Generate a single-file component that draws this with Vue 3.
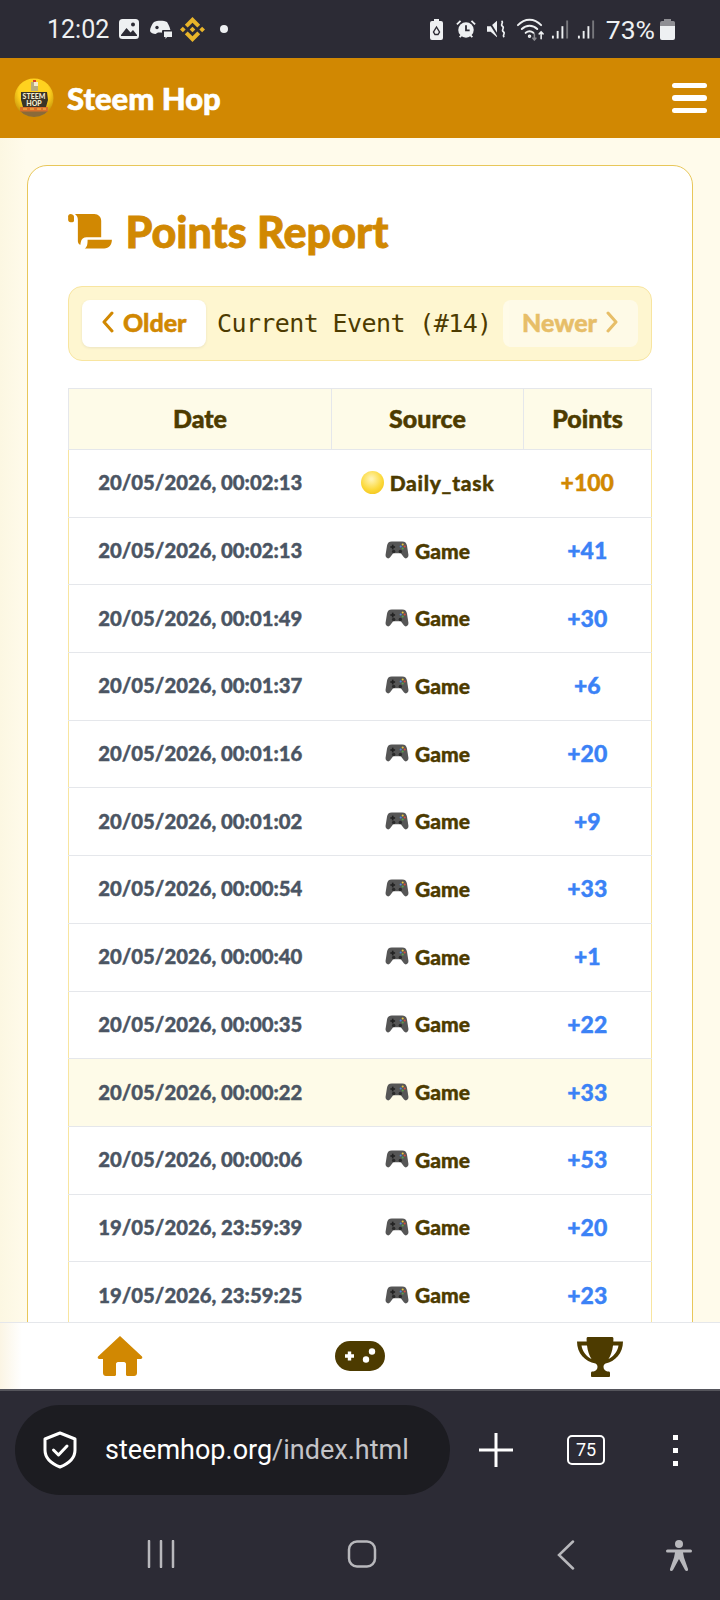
<template>
  <div class="phone">
    <div class="status-bar">
      <div class="status-left">
        <span class="clock">12:02</span>
        <svg width="22" height="22" viewBox="0 0 22 22">
          <rect x="1" y="1" width="20" height="20" rx="3.5" fill="#eef0f2" />
          <circle cx="15" cy="6.5" r="2" fill="#2c2b35" />
          <path d="M3 17l5.5-7 4 4.5 2.500-2.500 4 5v1H3z" fill="#2c2b35" />
        </svg>
        <svg width="24" height="22" viewBox="0 0 24 22">
          <path d="M5 4c3-1.600 10-1.600 13 0 2 3 3.500 7 3.500 9h-5l-2 3-2-1.500H9L6.500 16c-2 0-5-1-5.500-3C1 10 3 6 5 4z" fill="#eef0f2" />
          <circle cx="8" cy="9.500" r="1.700" fill="#2c2b35" />
          <rect x="13" y="12" width="11" height="8" rx="1" fill="#2c2b35" />
          <path d="M15 13.500h8v5.500h-5l-1.500 2v-2H15z" fill="#eef0f2" />
        </svg>
        <svg class="binance" width="25" height="25" viewBox="0 0 24 24" fill="#e9b52a">
          <path d="M16.624 13.920l2.718 2.716-7.353 7.353-7.353-7.352 2.718-2.717 4.635 4.660 4.636-4.660zm4.637-4.637L24 12l-2.715 2.716L18.568 12l2.693-2.716zm-9.272.001l2.716 2.692-2.716 2.717L9.272 12l2.717-2.715zm-9.272-.001L5.409 12l-2.692 2.692L0 12l2.717-2.717zM11.989.012l7.353 7.329-2.718 2.715-4.635-4.636-4.636 4.660-2.717-2.715 7.353-7.353z" />
        </svg>
        <span class="dot"></span>
      </div>
      <div class="status-right">
        <svg width="15" height="21" viewBox="0 0 15 21">
          <path d="M5 0h5v2h2a2 2 0 0 1 2 2v15a2 2 0 0 1-2 2H3a2 2 0 0 1-2-2V4a2 2 0 0 1 2-2h2z" fill="#eef0f2" />
          <path d="M7.500 8l-3 5 1.500 2.500h3L10.500 13z" fill="none" stroke="#2c2b35" stroke-width="1.400" />
        </svg>
        <svg class="gap-12" width="20" height="20" viewBox="0 0 22 22">
          <circle cx="11" cy="12" r="8.500" fill="#eef0f2" />
          <path d="M11 7v5.500h4" fill="none" stroke="#2c2b35" stroke-width="2" />
          <path d="M1 6l4-4M21 6l-4-4M4 20l2-2M18 20l-2-2" stroke="#eef0f2" stroke-width="2" />
        </svg>
        <svg class="gap-11" width="20" height="20" viewBox="0 0 22 22">
          <path d="M0 8h4l7-6v18l-7-6H0z" fill="#eef0f2" />
          <path d="M1 1l12 19" stroke="#2c2b35" stroke-width="2" />
          <path d="M16 2c3 2-2 4 1 6s-2 4 1 6-2 4 1 6" fill="none" stroke="#eef0f2" stroke-width="1.800" />
        </svg>
        <svg class="gap-9" width="29" height="24" viewBox="0 0 30 24" fill="none" stroke="#eef0f2" stroke-width="2" stroke-linecap="round">
          <path d="M2 8c7-7.500 17-7.500 24 0" />
          <path d="M6 12c4.500-4.500 11.500-4.500 16 0" />
          <path d="M10 16c2.500-2 5.500-2 8 0" />
          <circle cx="14" cy="19.500" r="0.800" />
          <path d="M26 22v-7M24 17l2-2 2 2" stroke-width="1.600" />
          <path d="M19 17v6M17.500 21.500l1.500 1.800 1.500-1.800" stroke="#8a8a90" stroke-width="1.600" />
        </svg>
        <svg class="gap-7" width="19" height="21" viewBox="0 0 20 21">
          <rect x="1" y="17" width="2" height="3" fill="#eef0f2" />
          <rect x="6" y="12" width="2" height="8" fill="#eef0f2" />
          <rect x="11" y="7" width="2" height="13" fill="#eef0f2" />
          <rect x="16" y="1" width="2" height="19" fill="#77777c" />
        </svg>
        <svg class="gap-8" width="19" height="21" viewBox="0 0 20 21">
          <rect x="1" y="17" width="2" height="3" fill="#eef0f2" />
          <rect x="6" y="12" width="2" height="8" fill="#eef0f2" />
          <rect x="11" y="7" width="2" height="13" fill="#eef0f2" />
          <rect x="16" y="1" width="2" height="19" fill="#77777c" />
        </svg>
        <span class="battery-pct">73%</span>
        <svg class="gap-5" width="15" height="21" viewBox="0 0 15 21">
          <path d="M4 0h7v2h1.500A2 2 0 0 1 15 4v5H0V4a2 2 0 0 1 2-2h2z" fill="#8f8f94" />
          <path d="M0 7h15v12a2 2 0 0 1-2 2H2a2 2 0 0 1-2-2z" fill="#eef0f2" />
        </svg>
      </div>
    </div>

    <header class="app-header">
      <div class="brand">
        <svg class="logo" width="40" height="40" viewBox="0 0 40 40">
          <defs>
            <radialGradient id="logoFill" cx="50%" cy="35%" r="65%">
              <stop offset="60%" stop-color="#ffd21f" />
              <stop offset="100%" stop-color="#c08c08" />
            </radialGradient>
          </defs>
          <circle cx="20" cy="20" r="19.500" fill="url(#logoFill)" />
          <path d="M3 29a19.500 19.500 0 0 0 34 0l-3 4H6z" fill="#8a6a3a" />
          <rect x="17" y="4" width="7" height="9" fill="#b9ad7c" />
          <rect x="20" y="4" width="4" height="4" fill="#f4ecd0" />
          <rect x="19" y="2" width="3" height="2" fill="#d8402a" />
          <path d="M7 14h26l1 8-2 7H9l-2-7z" fill="#3b3427" />
          <text x="20" y="20.500" text-anchor="middle" class="logo-text">STEEM</text>
          <text x="20" y="27.500" text-anchor="middle" class="logo-text">HOP</text>
          <rect x="6" y="29" width="28" height="4.500" fill="#d9702a" />
          <path d="M9 31h4M16 31h4M23 31h4M29 31h3" stroke="#ffc24a" stroke-width="1" />
        </svg>
        <span class="brand-name">Steem Hop</span>
      </div>
      <div class="burger"><span></span><span></span><span></span></div>
    </header>

    <main class="content">
      <section class="card">
        <h1 class="title">
          <svg width="45" height="35" viewBox="0 0 46 36" fill="#d18802">
            <path d="M0 2.500C0 1 1 0 2.500 0S6 1 6 2.500V7c0 .8-.7 1.500-1.500 1.500h-2C1 8.500 0 7.500 0 6z" />
            <path d="M7 0h20c4 0 7 3 7 7v17H19c-3 0-5.500 2-6 5l-.5 3C11 31 10 29.500 10 28V6c0-2.500-1-4.500-3-6z" />
            <path d="M20 26.500h25c0 5-3 9-8 9H17c2.500-1.500 3-4 3-9z" />
          </svg>
          <span>Points Report</span>
        </h1>

        <div class="pager">
          <button class="pager-btn">
            <svg width="13" height="22" viewBox="0 0 13 22"><path d="M11 2L3 11l8 9" fill="none" stroke="currentColor" stroke-width="3" stroke-linecap="round" stroke-linejoin="round" /></svg>
            Older
          </button>
          <span class="pager-label">Current Event (#14)</span>
          <button class="pager-btn disabled">
            Newer
            <svg width="13" height="22" viewBox="0 0 13 22"><path d="M2 2l8 9-8 9" fill="none" stroke="currentColor" stroke-width="3" stroke-linecap="round" stroke-linejoin="round" /></svg>
          </button>
        </div>

        <table class="report">
          <thead>
            <tr>
              <th class="col-date">Date</th>
              <th class="col-source">Source</th>
              <th class="col-points">Points</th>
            </tr>
          </thead>
          <tbody>
            <tr v-for="row in rows" :key="row.date + row.points" :class="{ hover: row.hover }">
              <td class="date">{{ row.date }}</td>
              <td class="source">
                <span class="source-inner" :class="{ daily: row.daily }">
                  <span v-if="row.daily" class="coin"></span>
                  <svg v-else width="24" height="20" viewBox="0 0 25 21">
                    <path d="M7 1.500h11c3 0 4.500 1.500 5 4.500l1.500 9.500c.4 3-2.600 5-4.600 3L16.500 14h-8l-3.400 4.500c-2 2-5 0-4.600-3L2 6c.5-3 2-4.500 5-4.500z" fill="#565656" />
                    <rect x="5.500" y="6.500" width="5" height="1.700" fill="#222" />
                    <rect x="7.150" y="4.900" width="1.700" height="5" fill="#222" />
                    <circle cx="18.500" cy="4.800" r="1.100" fill="#e8c43a" />
                    <circle cx="18.500" cy="9" r="1.100" fill="#5aa04a" />
                    <circle cx="16.400" cy="6.900" r="1.100" fill="#4a86d8" />
                    <circle cx="20.600" cy="6.900" r="1.100" fill="#d8503a" />
                    <circle cx="9" cy="12" r="1.800" fill="#2a2a2a" />
                    <circle cx="16" cy="12" r="1.800" fill="#2a2a2a" />
                  </svg>
                  {{ row.daily ? 'Daily_task' : 'Game' }}
                </span>
              </td>
              <td class="points" :class="{ gold: row.daily }">{{ row.points }}</td>
            </tr>
          </tbody>
        </table>
      </section>
    </main>

    <nav class="bottom-nav">
      <svg width="46" height="40" viewBox="0 0 46 40" fill="#d18802">
        <path d="M23 0L45 20.500c.8 1.500 0 2.500-1.500 2.500H40v14c0 1.700-1.300 3-3 3h-6.500c-1 0-1.500-.7-1.500-1.500V28c0-1-.8-2-2-2h-6c-1.200 0-2 1-2 2v10.500c0 .8-.5 1.500-1.500 1.500H9c-1.700 0-3-1.300-3-3V23H2.500C1 23 .2 22 1 20.500z" />
      </svg>
      <svg width="50" height="30" viewBox="0 0 50 30">
        <rect x="0" y="0" width="50" height="30" rx="15" fill="#4d3b00" />
        <path d="M10 15h9M14.500 10.500v9" stroke="#fff" stroke-width="3.400" />
        <circle cx="37" cy="10.500" r="3.200" fill="#fff" />
        <circle cx="31" cy="18.500" r="3.200" fill="#fff" />
      </svg>
      <svg width="46" height="41" viewBox="0 0 46 41" fill="none">
        <path d="M11 1h24c.8 0 1.400.6 1.400 1.400 0 1 0 2-.1 3H46c0 12-8 20-17.500 22-1.500 1-2 2-2 3.500 0 2.500 2 4 4 4.500h1c1 0 1.500.7 1.500 1.500v3c0 .7-.6 1.100-1.200 1.100H15.200c-.6 0-1.200-.4-1.200-1.100v-3c0-.8.5-1.500 1.500-1.500h1c2-.5 4-2 4-4.500 0-1.500-.5-2.500-2-3.500C8 25.400 0 17.400 0 5.400h9.700c-.1-1-.1-2-.1-3C9.600 1.600 10.200 1 11 1z" fill="#4d3b00" />
        <path d="M4.500 9.500c.8 6 5 11 10 13.500-2.300-3.500-3.800-8-4.500-13.500zM41.500 9.500c-.8 6-5 11-10 13.500 2.300-3.500 3.800-8 4.500-13.500z" fill="#fff" />
      </svg>
    </nav>

    <div class="browser-bar">
      <div class="url-pill">
        <svg width="36" height="38" viewBox="0 0 36 38" fill="none" stroke="#fff" stroke-width="3" stroke-linejoin="round" stroke-linecap="round">
          <path d="M18 2l15 6v11c0 8-6 13.500-15 17C9 32.500 3 27 3 19V8z" />
          <path d="M11.500 19l5 5 8.500-9" />
        </svg>
        <span class="url"><b>steemhop.org</b>/index.html</span>
      </div>
      <svg class="plus" width="34" height="34" viewBox="0 0 34 34"><path d="M17 0v34M0 17h34" stroke="#fff" stroke-width="3" /></svg>
      <div class="tabs">75</div>
      <div class="more"><span></span><span></span><span></span></div>
    </div>

    <div class="system-nav">
      <svg width="28" height="28" viewBox="0 0 28 28"><path d="M2 1v26M14 1v26M26 1v26" stroke="#b8b8bc" stroke-width="2.500" stroke-linecap="round" /></svg>
      <svg class="sys-home" width="30" height="28" viewBox="0 0 30 28"><rect x="2" y="1.500" width="26" height="25" rx="8" fill="none" stroke="#b8b8bc" stroke-width="2.500" /></svg>
      <svg class="sys-back" width="18" height="30" viewBox="0 0 18 30"><path d="M16 1.500L2 15l14 13.500" fill="none" stroke="#b8b8bc" stroke-width="2.500" stroke-linecap="round" /></svg>
      <svg class="sys-access" width="26" height="32" viewBox="0 0 26 32" fill="#b8b8bc">
        <circle cx="13" cy="4" r="4" />
        <path d="M1.500 9.500h23a1.500 1.500 0 0 1 0 3H17l1 5 4 11.500c.6 2-2 3-3 1l-6-11-6 11c-1 2-3.600 1-3-1l4-11.500 1-5H1.500a1.500 1.500 0 0 1 0-3z" />
      </svg>
    </div>
  </div>
</template>

<script setup>
const rows = [
  { date: '20/05/2026, 00:02:13', points: '+100', daily: true },
  { date: '20/05/2026, 00:02:13', points: '+41' },
  { date: '20/05/2026, 00:01:49', points: '+30' },
  { date: '20/05/2026, 00:01:37', points: '+6' },
  { date: '20/05/2026, 00:01:16', points: '+20' },
  { date: '20/05/2026, 00:01:02', points: '+9' },
  { date: '20/05/2026, 00:00:54', points: '+33' },
  { date: '20/05/2026, 00:00:40', points: '+1' },
  { date: '20/05/2026, 00:00:35', points: '+22' },
  { date: '20/05/2026, 00:00:22', points: '+33', hover: true },
  { date: '20/05/2026, 00:00:06', points: '+53' },
  { date: '19/05/2026, 23:59:39', points: '+20' },
  { date: '19/05/2026, 23:59:25', points: '+23' }
]
</script>

<style>
html,
body {
  margin: 0;
  background: #2c2b35;
}
</style>

<style scoped>
.phone {
  width: 720px;
  height: 1600px;
  display: flex;
  flex-direction: column;
  overflow: hidden;
  font-family: Lato, "Noto Sans", sans-serif;
  background: #fffbeb;
}

.status-bar {
  height: 58px;
  flex: none;
  background: #2c2b35;
  display: flex;
  align-items: center;
  justify-content: space-between;
  padding: 0 45px 0 47px;
  box-sizing: border-box;
  color: #eef0f2;
}

.status-left,
.status-right {
  display: flex;
  align-items: center;
}

.status-left {
  gap: 9px;
}

.clock {
  font: 25px Roboto, sans-serif;
}

.binance {
  margin-left: -2px;
}

.dot {
  width: 8px;
  height: 8px;
  border-radius: 50%;
  background: #eef0f2;
  margin-left: 6px;
}

.gap-5 {
  margin-left: 5px;
}

.gap-7 {
  margin-left: 6px;
}

.gap-8 {
  margin-left: 7px;
}

.gap-9 {
  margin-left: 9px;
}

.gap-11 {
  margin-left: 11px;
}

.gap-12 {
  margin-left: 12px;
}

.battery-pct {
  font: 26.5px Roboto, sans-serif;
  margin-left: 10px;
}

.app-header {
  height: 80px;
  flex: none;
  background: #d18802;
  display: flex;
  align-items: center;
  justify-content: space-between;
  padding: 0 13px 0 14px;
  box-sizing: border-box;
}

.brand {
  display: flex;
  align-items: center;
  gap: 13px;
}

.logo-text {
  fill: #f4ecd0;
  font: 900 7px Lato, sans-serif;
}

.brand-name {
  font-size: 31px;
  font-weight: 900;
  color: #fff;
  -webkit-text-stroke: 0.6px #fff;
}

.burger {
  width: 35px;
  display: flex;
  flex-direction: column;
  gap: 7px;
}

.burger span {
  height: 5.5px;
  border-radius: 3px;
  background: #fff;
}

.content {
  flex: 1;
  min-height: 0;
  overflow: hidden;
  padding: 27px 27px 0;
  background: linear-gradient(to right, #fcf7e2, #fffbeb 26px);
}

.card {
  background: #fff;
  border: 1.5px solid #e8c75a;
  border-radius: 20px;
  padding: 40px;
}

.title {
  display: flex;
  align-items: center;
  gap: 12.5px;
  margin: 0 0 30px;
  height: 50px;
  font-size: 43px;
  font-weight: 900;
  color: #d18802;
  -webkit-text-stroke: 0.8px #d18802;
}

.pager {
  height: 75px;
  box-sizing: border-box;
  background: #fef6d0;
  border: 1px solid #f8e5a0;
  border-radius: 14px;
  display: flex;
  align-items: center;
  justify-content: space-between;
  padding: 0 13px;
  margin-bottom: 27px;
}

.pager-btn {
  height: 47px;
  display: flex;
  align-items: center;
  gap: 9px;
  padding: 0 19px 3px;
  border: none;
  border-radius: 8px;
  background: #fff;
  box-shadow: 0 1px 3px rgba(0, 0, 0, 0.08);
  color: #d18802;
  font: 900 25px Lato, sans-serif;
  -webkit-text-stroke: 0.5px currentColor;
}

.pager-btn.disabled {
  opacity: 0.5;
  box-shadow: none;
}

.pager-label {
  font: 25px "DejaVu Sans Mono", monospace;
  letter-spacing: -0.6px;
  color: #4d3b00;
  white-space: nowrap;
}

.report {
  width: 100%;
  border-collapse: collapse;
  table-layout: fixed;
  font-size: 20px;
  border-left: 1px solid #f8e5a0;
  border-right: 1px solid #f8e5a0;
}

.report th {
  height: 57px;
  padding: 0 0 3px;
  background: #fefbe8;
  border: 1px solid #e5e7eb;
  font-size: 25px;
  font-weight: 900;
  color: #4d3b00;
  -webkit-text-stroke: 0.5px currentColor;
}

.col-date {
  width: 262px;
}

.col-source {
  width: 191px;
}

.report td {
  height: 64.7px;
  padding: 0 0 2px;
  text-align: center;
  border-bottom: 1px solid #e5e7eb;
  font-weight: 900;
  -webkit-text-stroke: 0.4px currentColor;
}

.report tr.hover td {
  background: #fefbe8;
}

.date {
  color: #4b5563;
  font-size: 20.3px;
}

.source {
  color: #4d3b00;
  font-size: 21px;
}

.source-inner {
  display: flex;
  justify-content: center;
  align-items: center;
  gap: 6px;
}

.source-inner.daily {
  letter-spacing: 0.7px;
}

.coin {
  width: 23px;
  height: 23px;
  border-radius: 50%;
  background: radial-gradient(circle at 45% 35%, #fff3b0 5%, #fcd93a 55%, #edb90f 100%);
}

.points {
  color: #3b82f6;
  font-size: 23px;
}

.points.gold {
  color: #d18802;
}

.bottom-nav {
  height: 69px;
  flex: none;
  background: linear-gradient(to right, #fbf5e4, #fff 22px);
  border-top: 1px solid #e5e7eb;
  border-bottom: 2px solid #55555c;
  box-sizing: border-box;
  display: grid;
  grid-template-columns: repeat(3, 1fr);
  align-items: center;
  justify-items: center;
}

.browser-bar {
  height: 118px;
  flex: none;
  background: #2c2b35;
  display: flex;
  align-items: center;
  padding-left: 15px;
  box-sizing: border-box;
}

.url-pill {
  width: 435px;
  height: 90px;
  border-radius: 45px;
  background: #1c1c21;
  display: flex;
  align-items: center;
  gap: 27px;
  padding-left: 27px;
  box-sizing: border-box;
  margin-right: 29px;
}

.url {
  font: 27px Roboto, sans-serif;
  color: #c4c4c8;
  white-space: nowrap;
}

.url b {
  font-weight: 400;
  color: #fff;
}

.tabs {
  margin-left: 54px;
  width: 38px;
  height: 30px;
  box-sizing: border-box;
  border: 2.5px solid #fff;
  border-radius: 5px;
  color: #fff;
  font: 18px/25px Roboto, sans-serif;
  text-align: center;
}

.more {
  margin-left: 68px;
  display: flex;
  flex-direction: column;
  gap: 8px;
}

.more span {
  width: 5px;
  height: 5px;
  background: #fff;
}

.system-nav {
  flex: none;
  height: 91px;
  background: #2c2b35;
  display: flex;
  align-items: flex-start;
  padding: 31px 0 0 147px;
  box-sizing: border-box;
}

.sys-home {
  margin-left: 172px;
}

.sys-back {
  margin-left: 180px;
}

.sys-access {
  margin-left: 91px;
}
</style>
